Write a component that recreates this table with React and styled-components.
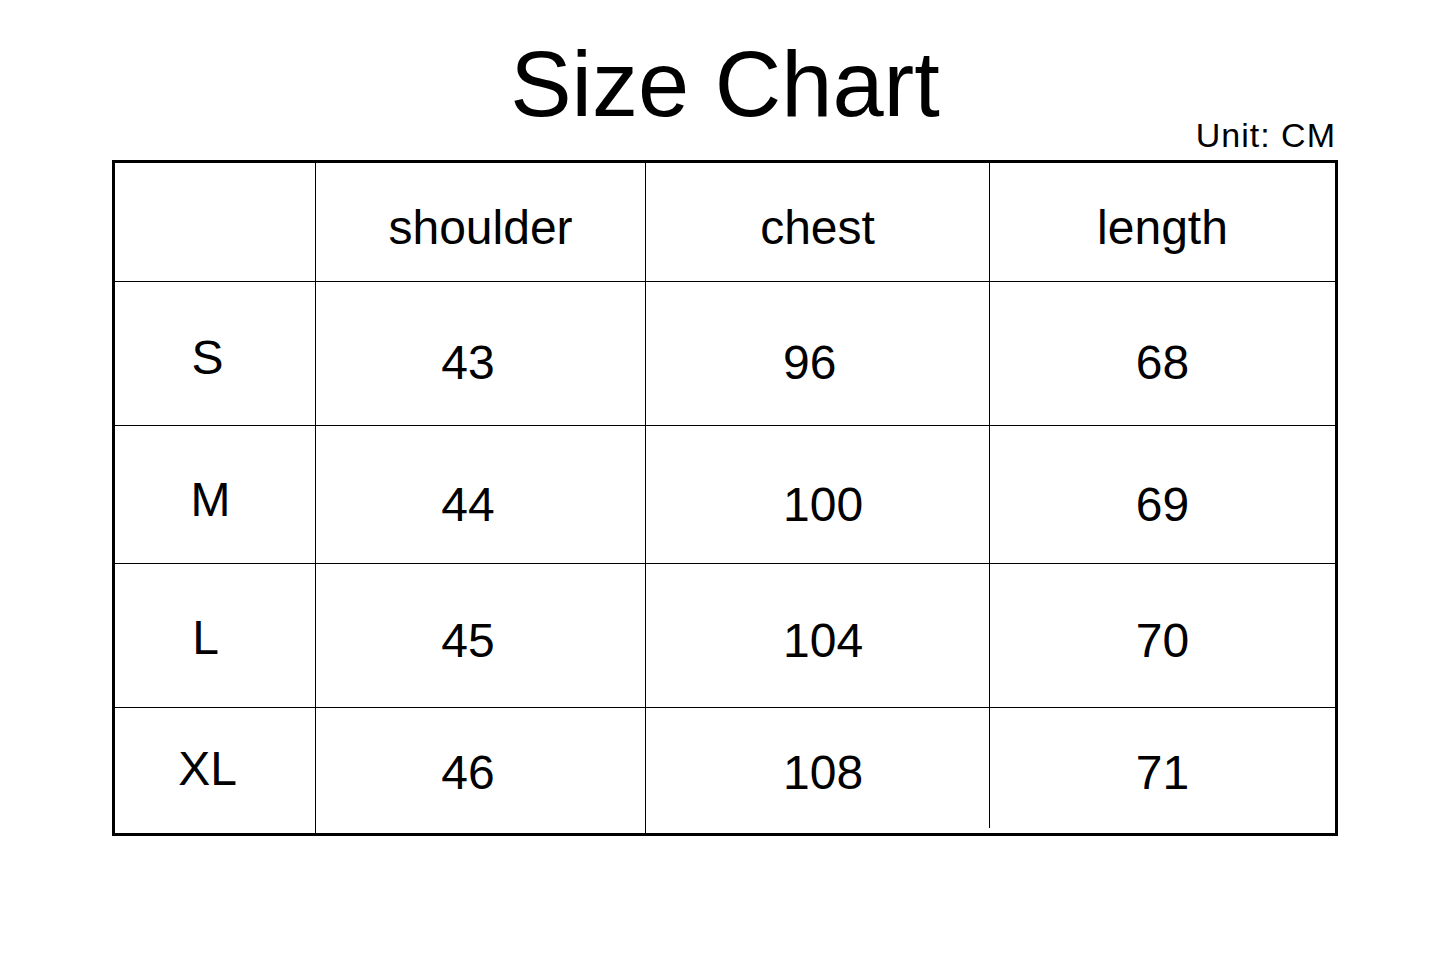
import React from 'react'
import styled, {createGlobalStyle} from 'styled-components'

const GlobalStyle = createGlobalStyle`
    body{
        margin:0;
        background:#fff;
        color:#000;
        font-family:"Liberation Sans", Arial, sans-serif;
    }
`

const Page = styled.main`
    width:1226px;
    padding-left:112px;
    display:flex;
    flex-direction:column;
`

const Title = styled.h1`
    margin:44px 0 0;
    font-size:92px;
    font-weight:400;
    line-height:80px;
    text-align:center;
`

const Unit = styled.div`
    font-size:34px;
    line-height:22px;
    letter-spacing:1px;
    text-align:right;
    margin-right:2px;
`

const Grid = styled.section`
    margin-top:14px;
    display:grid;
    grid-template-columns:200px 329px 343px 345px;
    grid-template-rows:118px 143px 137px 143px 125px;
    gap:1px;
    background:#000;
    border:3px solid #000;
`

const Cell = styled.div`
    position:relative;
    background:#fff;
    font-size:48px;
    line-height:48px;
    white-space:nowrap;
    text-align:${p => p.$align || 'center'};
    padding-top:${p => p.$top || 0}px;
    padding-left:${p => p.$left || 0}px;
    padding-right:${p => p.$right || 0}px;

    ${p => p.$cut && `
        &::before{
            content:'';
            position:absolute;
            left:-1px;
            bottom:0;
            width:1px;
            height:5px;
            background:#fff;
        }
    `}
`

const headers = ['shoulder', 'chest', 'length']

// how each data column sits in its cell
const columns = [
    {$align:'center', $right:25},
    {$align:'left', $left:137},
    {$align:'center'},
]

const rows = [
    {size:'S', values:[43, 96, 68], top:57, labelTop:52, labelRight:15},
    {size:'M', values:[44, 100, 69], top:55, labelTop:50, labelRight:9},
    {size:'L', values:[45, 104, 70], top:53, labelTop:50, labelRight:19},
    {size:'XL', values:[46, 108, 71], top:41, labelTop:37, labelRight:15},
]

const App = () => (
    <Page>
        <GlobalStyle/>
        <Title>Size Chart</Title>
        <Unit>Unit: CM</Unit>
        <Grid>
            <Cell/>
            {headers.map(h => (<Cell key={h} $top={41}>{h}</Cell>))}
            {rows.map((row, r) => (
                <React.Fragment key={row.size}>
                    <Cell $top={row.labelTop} $right={row.labelRight}>{row.size}</Cell>
                    {row.values.map((v, i) => (
                        <Cell key={i} $top={row.top} {...columns[i]}
                            $cut={r === rows.length - 1 && i === 2}>{v}</Cell>
                    ))}
                </React.Fragment>
            ))}
        </Grid>
    </Page>
)

export default App
